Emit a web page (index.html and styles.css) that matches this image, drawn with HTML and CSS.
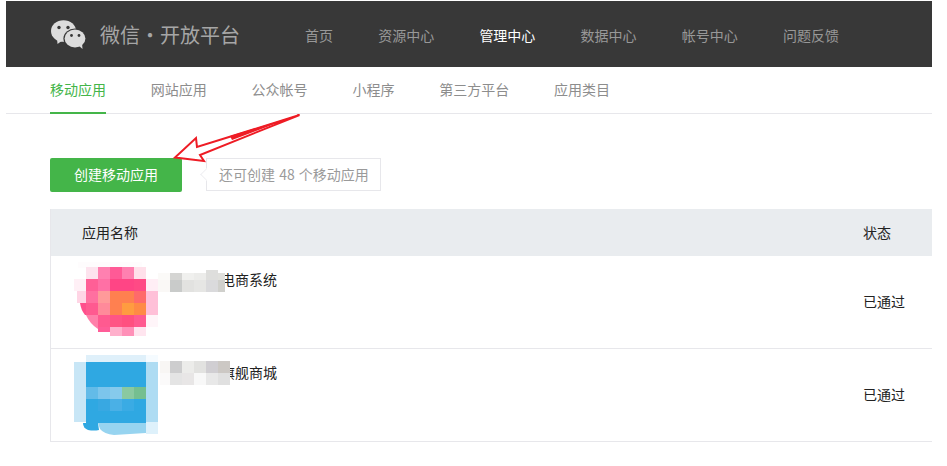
FILE: index.html
```html
<!DOCTYPE html>
<html lang="zh-CN">
<head>
    <meta charset="utf-8" />
    <title>微信开放平台 - 管理中心</title>
    <link rel="stylesheet" href="styles.css">
</head>
<body>
    <div class="page">

        <div class="topBar">
            <div class="logo">
                <svg class="logoIcon" width="35" height="29" viewBox="0 0 35 29">
                    <ellipse cx="12.5" cy="11" rx="12.5" ry="10.8" fill="#dcdcdc" />
                    <path d="M6 18 L6.5 24 L12 20 Z" fill="#dcdcdc" />
                    <ellipse cx="24" cy="18.5" rx="11.6" ry="10" fill="#383838" />
                    <ellipse cx="24" cy="18.5" rx="10.4" ry="9" fill="#dcdcdc" />
                    <path d="M27 25 L31.5 29 L31 23 Z" fill="#dcdcdc" />
                    <circle cx="8" cy="7.5" r="1.7" fill="#383838" />
                    <circle cx="17" cy="7.5" r="1.7" fill="#383838" />
                    <circle cx="20.5" cy="15.5" r="1.4" fill="#383838" />
                    <circle cx="28" cy="15.5" r="1.4" fill="#383838" />
                </svg>
                <span class="logoText">微信·开放平台</span>
            </div>
            <div class="topNav">
                <a>首页</a>
                <a>资源中心</a>
                <a class="on">管理中心</a>
                <a>数据中心</a>
                <a>帐号中心</a>
                <a>问题反馈</a>
            </div>
        </div>

        <div class="subNav">
            <a class="on">移动应用</a>
            <a>网站应用</a>
            <a>公众帐号</a>
            <a>小程序</a>
            <a>第三方平台</a>
            <a>应用类目</a>
        </div>

        <div class="content">
            <div class="actionRow">
                <a class="createBtn">创建移动应用</a>
                <div class="tip">还可创建 48 个移动应用</div>
            </div>

            <table class="appTable">
                <tr>
                    <th class="nameCol">应用名称</th>
                    <th class="stateCol">状态</th>
                </tr>
                <tr>
                    <td class="nameCol">
                        <div class="app">
                            <svg class="appIcon" width="84" height="84" viewBox="0 0 84 84" shape-rendering="crispEdges">
                                <rect x="4" y="0" width="64" height="6" fill="#fefcfd" />
                                <rect x="12" y="5" width="12" height="12" fill="#fde3ee" />
                                <rect x="24" y="5" width="12" height="12" fill="#ff80b0" />
                                <rect x="36" y="5" width="12" height="12" fill="#ff5a96" />
                                <rect x="48" y="5" width="12" height="12" fill="#ff80b0" />
                                <rect x="60" y="5" width="12" height="12" fill="#ffe0ea" />
                                <rect x="0" y="17" width="12" height="12" fill="#fff0f6" />
                                <rect x="12" y="17" width="12" height="12" fill="#ff5f96" />
                                <rect x="24" y="17" width="12" height="12" fill="#ff70a5" />
                                <rect x="36" y="17" width="24" height="12" fill="#ff4585" />
                                <rect x="60" y="17" width="12" height="12" fill="#ff4a85" />
                                <rect x="72" y="17" width="12" height="12" fill="#ffeef5" />
                                <rect x="3" y="29" width="9" height="12" fill="#ffd5e5" />
                                <rect x="12" y="29" width="12" height="12" fill="#ff70a0" />
                                <rect x="24" y="29" width="12" height="12" fill="#ff9a9a" />
                                <rect x="36" y="29" width="24" height="12" fill="#ff8050" />
                                <rect x="60" y="29" width="12" height="12" fill="#ff6a6a" />
                                <rect x="72" y="29" width="12" height="12" fill="#ffc0d8" />
                                <path d="M6 41 H12 V53 H11 Q7 48 6 41 Z" fill="#ff4f8c" shape-rendering="auto" />
                                <rect x="12" y="41" width="12" height="12" fill="#ff5a90" />
                                <rect x="24" y="41" width="12" height="12" fill="#ff8a9a" />
                                <rect x="36" y="41" width="12" height="12" fill="#ff8050" />
                                <rect x="48" y="41" width="12" height="12" fill="#ff9c40" />
                                <rect x="60" y="41" width="12" height="12" fill="#ff8a45" />
                                <rect x="72" y="41" width="12" height="12" fill="#ffc0d8" />
                                <path d="M12 53 H24 V67 Q16 62 12 53 Z" fill="#ff80aa" shape-rendering="auto" />
                                <rect x="24" y="53" width="12" height="12" fill="#ff5a90" />
                                <rect x="36" y="53" width="12" height="12" fill="#ff5585" />
                                <rect x="48" y="53" width="12" height="12" fill="#ff5080" />
                                <rect x="60" y="53" width="12" height="12" fill="#ff5a90" />
                                <rect x="72" y="53" width="12" height="12" fill="#fff5f9" />
                                <rect x="24" y="65" width="12" height="5" fill="#ff5d98" />
                                <rect x="36" y="65" width="12" height="9" fill="#ffb0cc" />
                                <rect x="48" y="65" width="12" height="9" fill="#ff90b8" />
                                <rect x="60" y="65" width="12" height="9" fill="#ffe5ef" />
                            </svg>
                            <div class="appName">电商系统
                                <svg class="nameMask" width="72" height="24" viewBox="0 0 72 24" shape-rendering="crispEdges">
                                    <rect x="0" y="5" width="12" height="7" fill="#fbfaf8" />
                                    <rect x="12" y="5" width="12" height="7" fill="#d5d5d3" />
                                    <rect x="24" y="5" width="12" height="7" fill="#f0f0ee" />
                                    <rect x="36" y="5" width="12" height="7" fill="#ececea" />
                                    <rect x="48" y="2" width="12" height="10" fill="#dededc" />
                                    <rect x="60" y="5" width="7" height="7" fill="#e0e0dc" />
                                    <rect x="0" y="12" width="12" height="12" fill="#faf8f6" />
                                    <rect x="12" y="12" width="12" height="12" fill="#c9cbca" />
                                    <rect x="24" y="12" width="12" height="12" fill="#e2e2e0" />
                                    <rect x="36" y="12" width="12" height="12" fill="#e6e6e4" />
                                    <rect x="48" y="12" width="12" height="12" fill="#dadadc" />
                                    <rect x="60" y="12" width="7" height="12" fill="#d0d0cc" />
                                </svg>
                            </div>
                        </div>
                    </td>
                    <td class="stateCol">已通过</td>
                </tr>
                <tr>
                    <td class="nameCol">
                        <div class="app">
                            <svg class="appIcon" width="84" height="84" viewBox="0 0 84 84" shape-rendering="crispEdges">
                                <rect x="12" y="0" width="60" height="7" fill="#dff0fa" />
                                <rect x="0" y="7" width="12" height="60" fill="#c8e6f6" />
                                <rect x="72" y="0" width="12" height="7" fill="#f5fbff" />
                                <rect x="72" y="7" width="12" height="60" fill="#aedcf3" />
                                <rect x="72" y="67" width="12" height="12" fill="#def1fb" />
                                <rect x="12" y="7" width="60" height="25" fill="#2fa8e2" />
                                <rect x="12" y="32" width="12" height="12" fill="#63bbe8" />
                                <rect x="24" y="32" width="12" height="12" fill="#7cc5ec" />
                                <rect x="36" y="32" width="12" height="12" fill="#86caec" />
                                <rect x="48" y="32" width="12" height="12" fill="#8ac9a0" />
                                <rect x="60" y="32" width="12" height="12" fill="#75bf90" />
                                <rect x="12" y="44" width="60" height="24" fill="#2fa8e2" />
                                <rect x="24" y="44" width="12" height="12" fill="#38a8e2" />
                                <rect x="36" y="44" width="12" height="12" fill="#4ab0e6" />
                                <rect x="48" y="44" width="12" height="12" fill="#3aabe4" />
                                <path d="M9 68 H24 L25 75 Q20 76 14 75 Q9 73 9 68 Z" fill="#2fa8e2" shape-rendering="auto" />
                                <path d="M24 68 H72 V78 L40 80 Q30 79 26 74 Z" fill="#97d4f0" shape-rendering="auto" />
                            </svg>
                            <div class="appName">旗舰商城
                                <svg class="nameMask" width="72" height="24" viewBox="0 0 72 24" shape-rendering="crispEdges">
                                    <rect x="2" y="0" width="10" height="12" fill="#f8f6f4" />
                                    <rect x="12" y="0" width="12" height="12" fill="#cdcdce" />
                                    <rect x="24" y="0" width="12" height="12" fill="#ececea" />
                                    <rect x="36" y="0" width="12" height="12" fill="#e2e2e0" />
                                    <rect x="48" y="0" width="12" height="12" fill="#d0ced2" />
                                    <rect x="60" y="0" width="12" height="12" fill="#ccc8c4" />
                                    <rect x="2" y="12" width="10" height="12" fill="#fbfafa" />
                                    <rect x="12" y="12" width="12" height="12" fill="#e4e4e4" />
                                    <rect x="24" y="12" width="12" height="12" fill="#e8e6e6" />
                                    <rect x="36" y="12" width="12" height="12" fill="#f8f8f8" />
                                    <rect x="48" y="12" width="12" height="12" fill="#e8e8e8" />
                                    <rect x="60" y="12" width="12" height="12" fill="#e0e0e0" />
                                </svg>
                            </div>
                        </div>
                    </td>
                    <td class="stateCol">已通过</td>
                </tr>
            </table>
        </div>

        <!-- 红色箭头标注 -->
        <svg class="arrow" width="140" height="60" viewBox="0 0 140 60">
            <path d="M129.5 3 L27 35 L26 26 L5 45.5 L34 49 L30 43 Z" fill="#fff" stroke="#ee1c25" stroke-width="2" stroke-linejoin="miter" />
            <path d="M130 2.5 L60 24 L62 28 Z" fill="#ee1c25" />
        </svg>

    </div>
</body>
</html>
```

FILE: styles.css
```css
body {
    margin: 0;
    background-color: #FFFFFF;
    font-family: "Noto Sans CJK SC", "Liberation Sans", sans-serif;
    font-size: 14px;
    color: #222222;
    overflow: hidden;
}

a {
    cursor: pointer;
}

.page {
    position: relative;
    width: 926px;
    margin: 1px 0 0 6px;
}

/* top bar */
.topBar {
    display: flex;
    align-items: center;
    height: 66px;
    background-color: #383838;
}

.logo {
    display: flex;
    align-items: center;
    width: 299px;
    padding-left: 45px;
    box-sizing: border-box;
}

.logoIcon {
    margin-right: 14px;
}

.logoText {
    font-size: 20px;
    color: #a6a6a6;
    white-space: nowrap;
}

.topNav {
    display: flex;
    gap: 45.2px;
    padding-top: 2px;
    color: #989898;
}

.topNav .on {
    color: #FFFFFF;
}

/* sub nav */
.subNav {
    display: flex;
    gap: 44.8px;
    height: 46px;
    padding-left: 44px;
    border-bottom: 1px solid #e7e7eb;
    color: #8d8d8d;
}

.subNav a {
    height: 45px;
    line-height: 44px;
    border-bottom: 2px solid transparent;
}

.subNav .on {
    color: #44b549;
    border-bottom-color: #44b549;
}

/* content */
.content {
    padding: 44px 0 0 44px;
}

.actionRow {
    display: flex;
    align-items: flex-start;
    height: 34px;
    margin-bottom: 17px;
}

.createBtn {
    width: 132px;
    height: 34px;
    line-height: 32px;
    text-align: center;
    color: #FFFFFF;
    background-color: #44b549;
    border-radius: 2px;
}

.tip {
    position: relative;
    margin-left: 24px;
    width: 175px;
    height: 33px;
    line-height: 31px;
    box-sizing: border-box;
    padding-left: 12px;
    border: 1px solid #e7e7eb;
    color: #9a9a9a;
    word-spacing: 1px;
    white-space: nowrap;
}

.tip::before {
    content: "";
    position: absolute;
    left: -5px;
    top: 11px;
    width: 8px;
    height: 8px;
    background-color: #FFFFFF;
    border-left: 1px solid #f0f0f3;
    border-bottom: 1px solid #f0f0f3;
    transform: rotate(45deg);
}

/* table */
.appTable {
    width: 882px;
    border-collapse: collapse;
    border-left: 1px solid #e7e7eb;
}

.appTable th {
    height: 45px;
    padding: 0 0 2px 0;
    font-weight: normal;
    text-align: left;
    background-color: #e9ecef;
    color: #222222;
}

.appTable td {
    height: 92px;
    padding: 0;
    border-bottom: 1px solid #e7e7eb;
}

.appTable th.nameCol {
    padding-left: 31px;
}

.stateCol {
    width: 69px;
}

.appTable td.stateCol {
    height: 90px;
    padding-bottom: 2px;
}

.app {
    display: flex;
    height: 92px;
    padding-left: 23px;
}

.appIcon {
    flex: none;
    margin-top: 6px;
}

.appName {
    position: relative;
    margin: 12px 0 0 63px;
    line-height: 22px;
}

.nameMask {
    position: absolute;
    left: -63px;
    top: 0;
}

.arrow {
    position: absolute;
    left: 164px;
    top: 111px;
}
```
